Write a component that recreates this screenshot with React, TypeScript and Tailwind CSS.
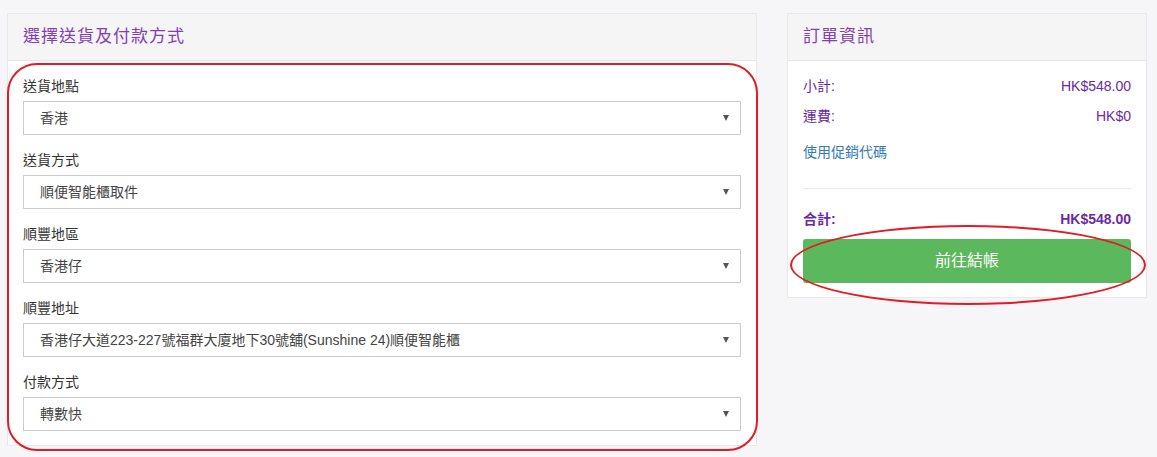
import React from "react"

const font = { fontFamily: '"Liberation Sans", "Noto Sans CJK TC", sans-serif' }

interface Field {
    label: string
    value: string
}

const fields: Field[] = [
    { label: "送貨地點", value: "香港" },
    { label: "送貨方式", value: "順便智能櫃取件" },
    { label: "順豐地區", value: "香港仔" },
    { label: "順豐地址", value: "香港仔大道223-227號福群大廈地下30號舖(Sunshine 24)順便智能櫃" },
    { label: "付款方式", value: "轉數快" },
]

function Select({ value }: { value: string }) {
    return (
        <div className="flex items-center justify-between h-[34px] border border-[#cccccc] bg-white pl-[16px] pr-[11px]">
            <span className="text-[14px] text-[#444]">{value}</span>
            <span className="w-0 h-0 border-l-[3.5px] border-r-[3.5px] border-t-[6px] border-l-transparent border-r-transparent border-t-[#555]" />
        </div>
    )
}

function PanelHeader({ title }: { title: string }) {
    return (
        <div className="h-[47px] flex items-center px-[15px] bg-[#f5f5f5] border-b border-[#e6e6e6]">
            <h3 className="text-[17px] text-[#8140b3] tracking-[1px]">{title}</h3>
        </div>
    )
}

function Row({ label, value, bold }: { label: string; value: string; bold?: boolean }) {
    return (
        <div className={`flex justify-between h-[20px] items-center text-[14px] text-[#6a2aa3] ${bold ? "font-bold" : ""}`}>
            <span>{label}</span>
            <span>{value}</span>
        </div>
    )
}

export default function App() {
    return (
        <div className="relative min-h-[457px] bg-[#f6f6f8] pt-[13px] pl-[7px] flex gap-[30px] items-start" style={font}>
            <div className="w-[750px] bg-white border border-[#e8e8e8]">
                <PanelHeader title="選擇送貨及付款方式" />
                <div className="pt-[15px] pb-[14px] px-[15px]">
                    {fields.map((f, i) => (
                        <div key={f.label} className={i < fields.length - 1 ? "mb-[15px]" : ""}>
                            <label className="block h-[20px] leading-[20px] mb-[5px] text-[14px] text-[#333]">{f.label}</label>
                            <Select value={f.value} />
                        </div>
                    ))}
                </div>
            </div>

            <div className="w-[360px] bg-white border border-[#e8e8e8]">
                <PanelHeader title="訂單資訊" />
                <div className="pt-[15px] pb-[14px] px-[15px]">
                    <Row label="小計:" value="HK$548.00" />
                    <div className="mt-[10px]">
                        <Row label="運費:" value="HK$0" />
                    </div>
                    <div className="mt-[16px] h-[20px] leading-[20px] text-[14px] text-[#337ab7]">使用促銷代碼</div>
                    <div className="mt-[26px] border-t border-[#e8e8e8]" />
                    <div className="mt-[20px]">
                        <Row label="合計:" value="HK$548.00" bold />
                    </div>
                    <button className="mt-[10px] w-full h-[44px] rounded-[3px] bg-[#5cb85c] text-white text-[16px]">
                        前往結帳
                    </button>
                </div>
            </div>

            {/* red annotations */}
            <div className="absolute left-[7px] top-[63px] w-[751px] h-[388px] border-2 border-[#e21b25] rounded-[30px] pointer-events-none" />
            <div className="absolute left-[790px] top-[225px] w-[356px] h-[80px] border-2 border-[#e21b25] rounded-[50%] pointer-events-none" />
        </div>
    )
}
